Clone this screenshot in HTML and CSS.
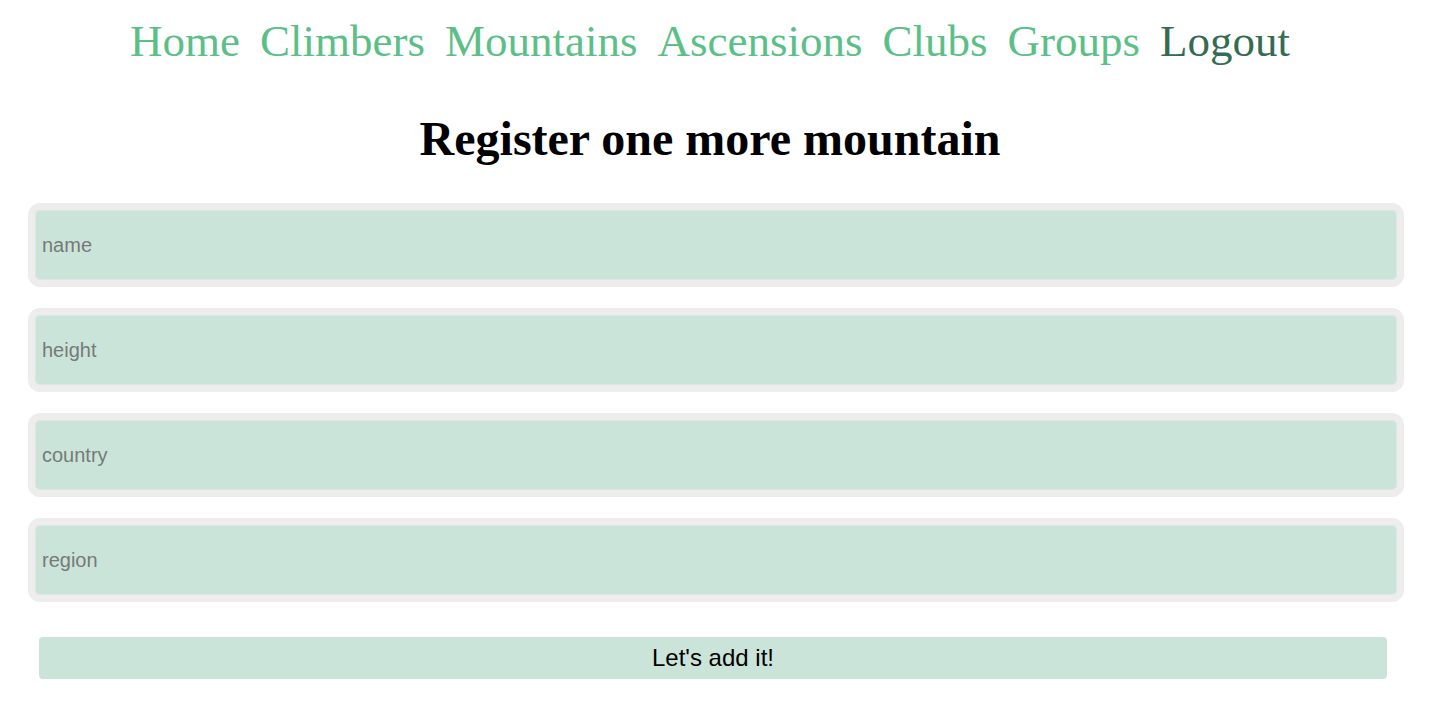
FILE: index.html
```html
<!DOCTYPE html>
<html>
<head>
<meta charset="utf-8">
<link rel="stylesheet" href="styles.css">
</head>
<body>
<nav class="nav">
  <a class="nav-link" href="#">Home</a>
  <a class="nav-link" href="#">Climbers</a>
  <a class="nav-link" href="#">Mountains</a>
  <a class="nav-link" href="#">Ascensions</a>
  <a class="nav-link" href="#">Clubs</a>
  <a class="nav-link" href="#">Groups</a>
  <a class="nav-link nav-logout" href="#">Logout</a>
</nav>
<h1 class="title">Register one more mountain</h1>
<form class="form">
  <input class="field" type="text" placeholder="name">
  <input class="field" type="text" placeholder="height">
  <input class="field" type="text" placeholder="country">
  <input class="field" type="text" placeholder="region">
  <button class="submit" type="button">Let's add it!</button>
</form>
</body>
</html>
```
FILE: styles.css
```css
html, body {
  margin: 0;
  padding: 0;
  background: #fff;
}
body {
  font-family: "Liberation Serif", "Times New Roman", serif;
}
.nav {
  display: flex;
  justify-content: center;
  gap: 20px;
  padding-top: 13px;
  height: 60px;
  padding-right: 14px;
}
.nav-link {
  font-size: 45px;
  line-height: 56px;
  color: #5bbf87;
  text-decoration: none;
}
.nav-logout {
  color: #356b53;
}
.title {
  margin: 38px 0 0;
  padding-right: 14px;
  text-align: center;
  font-size: 48px;
  line-height: 56px;
  font-weight: bold;
  color: #000;
}
.form {
  display: flex;
  flex-direction: column;
  gap: 21px;
  padding: 36px 30px 0 28px;
}
.field {
  box-sizing: border-box;
  height: 84px;
  width: 100%;
  margin: 0;
  border: 7px solid #ededed;
  border-radius: 12px;
  background: #cbe4da;
  box-shadow: inset 0 0 0 1px #dfe6e2;
  padding: 0 7px;
  font-family: "Liberation Sans", Arial, sans-serif;
  font-size: 20px;
  color: #333;
  outline: none;
}
.field::placeholder {
  color: #767a78;
}
.submit {
  margin: 14px 17px 0 11px;
  height: 42px;
  border: none;
  border-radius: 4px;
  background: #cbe4da;
  font-family: "Liberation Sans", Arial, sans-serif;
  font-size: 24px;
  color: #000;
}
```
